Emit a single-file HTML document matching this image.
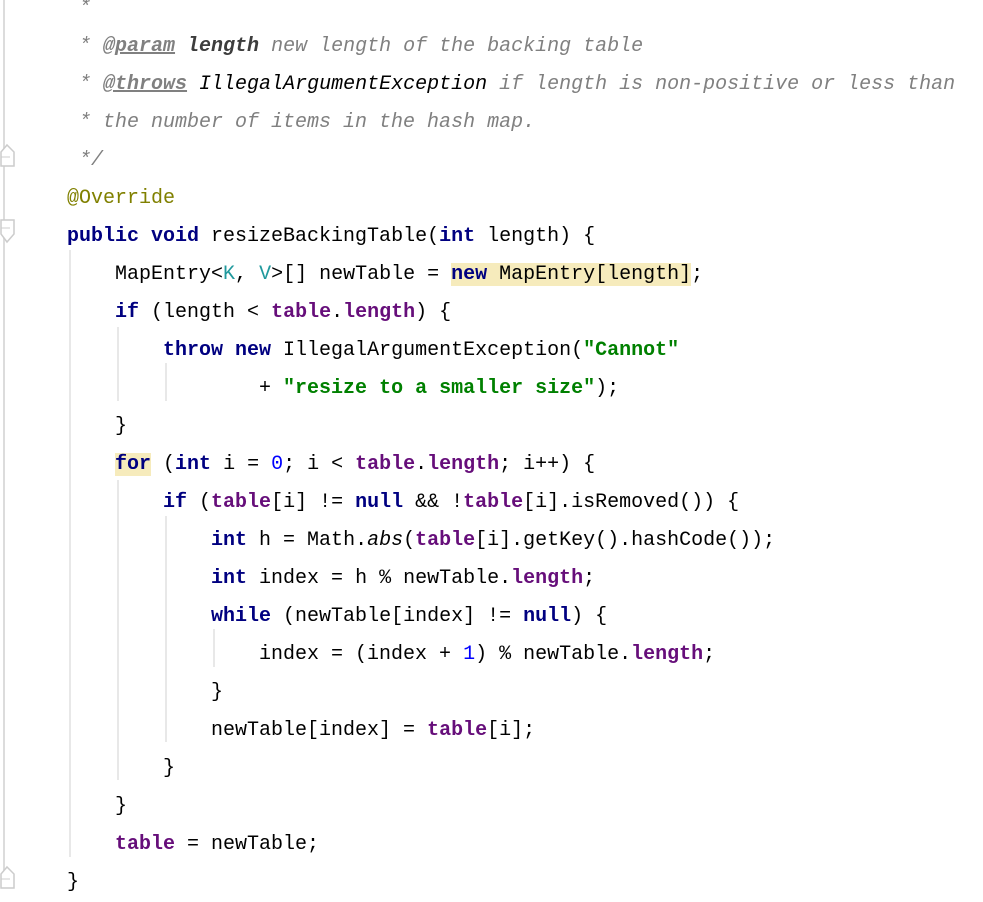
<!DOCTYPE html>
<html><head><meta charset="utf-8"><style>
body{margin:0;width:983px;height:886px;background:#fff;overflow:hidden;position:relative;font-family:"Liberation Mono","Noto Sans CJK SC",monospace;font-size:20px;color:#000}
.l{position:absolute;left:67px;height:38px;line-height:38px;white-space:pre}
.k{color:#000080;font-weight:bold}
.f{color:#660e7a;font-weight:bold}
.s{color:#008000;font-weight:bold}
.n{color:#0000ff}
.c{color:#808080;font-style:italic}
.t{color:#808080;font-style:italic;font-weight:bold;text-decoration:underline}
.p{color:#3d3d3d;font-style:italic;font-weight:bold}
.a{color:#808000}
.g{color:#20999d}
.h{background:#f6ebbc}
.v{position:absolute;width:2px;background:#e8e8e8}
</style></head><body>
<div style="position:absolute;left:3px;top:0;width:2px;height:886px;background:#dcdcdc"></div>
<svg style="position:absolute;left:0;top:140px" width="16" height="30"><path d="M1 12 L7 5 L14 12 L14 26 L1 26 Z" fill="#fff" stroke="#ccc" stroke-width="1.5"/><line x1="1" y1="17" x2="10" y2="17" stroke="#ccc"/></svg>
<svg style="position:absolute;left:0;top:218px" width="16" height="30"><path d="M1 2 L14 2 L14 16 L7 24 L1 16 Z" fill="#fff" stroke="#ccc" stroke-width="1.5"/><line x1="1" y1="10" x2="10" y2="10" stroke="#ccc"/></svg>
<svg style="position:absolute;left:0;top:862px" width="16" height="30"><path d="M1 12 L7 5 L14 12 L14 26 L1 26 Z" fill="#fff" stroke="#ccc" stroke-width="1.5"/><line x1="1" y1="17" x2="10" y2="17" stroke="#ccc"/></svg>
<div class="v" style="left:69px;top:250px;height:607px"></div>
<div class="v" style="left:117px;top:327px;height:74px"></div>
<div class="v" style="left:117px;top:480px;height:300px"></div>
<div class="v" style="left:165px;top:363px;height:38px"></div>
<div class="v" style="left:165px;top:516px;height:226px"></div>
<div class="v" style="left:213px;top:629px;height:38px"></div>
<div class="l c" style="top:-10px"> *</div>
<div class="l c" style="top:28px"> * <span class="t">@param</span> <span class="p">length</span> new length of the backing table</div>
<div class="l c" style="top:66px"> * <span class="t">@throws</span> <span class="p" style="font-weight:normal;color:#000">IllegalArgumentException</span> if length is non-positive or less than</div>
<div class="l c" style="top:104px"> * the number of items in the hash map.</div>
<div class="l c" style="top:142px"> */</div>
<div class="l a" style="top:180px">@Override</div>
<div class="l" style="top:218px"><span class="k">public void</span> resizeBackingTable(<span class="k">int</span> length) {</div>
<div class="l" style="top:256px">    MapEntry&lt;<span class="g">K</span>, <span class="g">V</span>&gt;[] newTable = <span class="h"><span class="k">new</span> MapEntry[length]</span>;</div>
<div class="l" style="top:294px">    <span class="k">if</span> (length &lt; <span class="f">table</span>.<span class="f">length</span>) {</div>
<div class="l" style="top:332px">        <span class="k">throw new</span> IllegalArgumentException(<span class="s">"Cannot"</span></div>
<div class="l" style="top:370px">                + <span class="s">"resize to a smaller size"</span>);</div>
<div class="l" style="top:408px">    }</div>
<div class="l" style="top:446px">    <span class="k h">for</span> (<span class="k">int</span> i = <span class="n">0</span>; i &lt; <span class="f">table</span>.<span class="f">length</span>; i++) {</div>
<div class="l" style="top:484px">        <span class="k">if</span> (<span class="f">table</span>[i] != <span class="k">null</span> &amp;&amp; !<span class="f">table</span>[i].isRemoved()) {</div>
<div class="l" style="top:522px">            <span class="k">int</span> h = Math.<i>abs</i>(<span class="f">table</span>[i].getKey().hashCode());</div>
<div class="l" style="top:560px">            <span class="k">int</span> index = h % newTable.<span class="f">length</span>;</div>
<div class="l" style="top:598px">            <span class="k">while</span> (newTable[index] != <span class="k">null</span>) {</div>
<div class="l" style="top:636px">                index = (index + <span class="n">1</span>) % newTable.<span class="f">length</span>;</div>
<div class="l" style="top:674px">            }</div>
<div class="l" style="top:712px">            newTable[index] = <span class="f">table</span>[i];</div>
<div class="l" style="top:750px">        }</div>
<div class="l" style="top:788px">    }</div>
<div class="l" style="top:826px">    <span class="f">table</span> = newTable;</div>
<div class="l" style="top:864px">}</div>
</body></html>
